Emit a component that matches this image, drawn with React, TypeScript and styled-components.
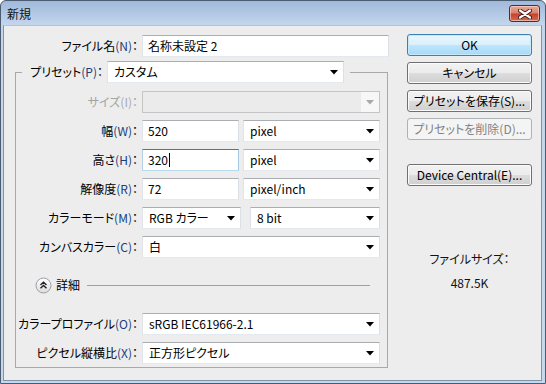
import React from "react";
import styled, { createGlobalStyle, css } from "styled-components";

const Global = createGlobalStyle`
  html, body { margin: 0; padding: 0; background: #ffffff; }
  body {
    font-family: "Noto Sans CJK JP", "Noto Sans", sans-serif;
    font-size: 12px;
    font-feature-settings: "palt" 1;
    color: #000;
  }
  * { box-sizing: border-box; }
`;

const Window = styled.div`
  width: 546px;
  height: 384px;
  display: flex;
  flex-direction: column;
  border: 1px solid #4b5b70;
  border-radius: 6px 6px 0 0;
  background: linear-gradient(to bottom, #a0b9db 0px, #c3d6ec 24px, #c4d8ee 100%);
  overflow: hidden;
`;

const TitleBar = styled.div`
  height: 24px;
  display: flex;
  align-items: flex-start;
  padding-left: 6px;
  flex: none;
`;

const Title = styled.div`
  font-size: 12px;
  line-height: 16px;
  margin-top: 5px;
  color: #111;
`;

const CloseButton = styled.div`
  margin-left: auto;
  margin-right: 5px;
  margin-top: 4px;
  width: 31px;
  height: 17px;
  border: 1px solid #5b2a24;
  border-radius: 3px;
  background: linear-gradient(to bottom, #eaa999 0%, #d98370 45%, #c4452e 55%, #d46a4e 100%);
  box-shadow: inset 0 0 0 1px rgba(255, 220, 210, 0.6);
  display: flex;
  align-items: center;
  justify-content: center;
`;

const Client = styled.div`
  flex: 1;
  margin: 0 3px 2px 2px;
  border: 1px solid #7e92ab;
  border-top-color: #b0c4de;
  background: #ededed;
  display: flex;
  align-items: flex-start;
`;

const LeftCol = styled.div`
  width: 385px;
  padding: 9px 0 0 11px;
  display: flex;
  flex-direction: column;
`;

const RightCol = styled.div`
  width: 125px;
  margin-left: 18px;
  padding-top: 8px;
  display: flex;
  flex-direction: column;
  gap: 6px;
`;

const Row = styled.div`
  display: flex;
  align-items: center;
  gap: 4px;
`;

const Label = styled.div<{ $w: number; $disabled?: boolean }>`
  width: ${(p) => p.$w}px;
  flex: none;
  text-align: right;
  line-height: 16px;
  white-space: nowrap;
  color: ${(p) => (p.$disabled ? "#a3a3a3" : "#000")};
`;

const Key = styled.span<{ $disabled?: boolean }>`
  color: ${(p) => (p.$disabled ? "#a7acb4" : "#1b3d78")};
`;

const fieldBase = css`
  height: 22px;
  border: 1px solid;
  border-color: #abadb3 #dbdfe6 #e3e9ef #e2e3ea;
  background: #fff;
  display: flex;
  align-items: center;
  line-height: 16px;
  white-space: nowrap;
  flex: none;
`;

const Input = styled.div<{ $w: number; $focused?: boolean }>`
  ${fieldBase};
  width: ${(p) => p.$w}px;
  padding-left: 5px;
  ${(p) =>
    p.$focused &&
    css`
      border-color: #3d7bad #a4c9e3 #b7d9ed #b5cfe7;
    `}
`;

const Caret = styled.span`
  display: inline-block;
  width: 1px;
  height: 14px;
  background: #000;
  margin-left: 1px;
`;

const Select = styled.div<{ $w: number; $ml?: number; $disabled?: boolean }>`
  ${fieldBase};
  width: ${(p) => p.$w}px;
  margin-left: ${(p) => p.$ml ?? 0}px;
  padding-left: 6px;
  justify-content: space-between;
  ${(p) =>
    p.$disabled &&
    css`
      background: #ebebeb;
      border-color: #c5c5c5;
    `}
`;

const Arrow = styled.span<{ $disabled?: boolean }>`
  width: 18px;
  height: 20px;
  display: flex;
  align-items: center;
  justify-content: center;
  flex: none;
  background: ${(p) => (p.$disabled ? "#f7f7f7" : "transparent")};
`;

const Group = styled.fieldset`
  margin: 4px 0 0 0;
  padding: 8px 7px 3px 0;
  width: 373px;
  border: 1px solid #a9a9a9;
  min-width: 0;
  display: flex;
  flex-direction: column;
  gap: 7px;
`;

const Legend = styled.legend`
  margin-left: 6px;
  padding: 0 6px 0 0;
  display: flex;
  align-items: center;
  gap: 4px;
`;

const AdvancedRow = styled.div`
  display: flex;
  align-items: center;
  height: 16px;
  margin: 12px 10px 13px 19px;
`;

const AdvancedText = styled.span`
  margin-left: 4px;
  line-height: 16px;
`;

const Rule = styled.div`
  flex: 1;
  height: 1px;
  background: #a0a0a0;
  margin-left: 7px;
`;

const Button = styled.div<{ $variant?: "default" | "disabled"; $mt?: number }>`
  height: 22px;
  margin-top: ${(p) => p.$mt ?? 0}px;
  border: 1px solid #707070;
  border-radius: 3px;
  background: linear-gradient(to bottom, #f2f2f2 0%, #ebebeb 50%, #dddddd 50%, #cfcfcf 100%);
  box-shadow: inset 0 0 0 1px #fbfbfb;
  display: flex;
  align-items: center;
  justify-content: center;
  line-height: 16px;
  white-space: nowrap;
  color: #000;
  ${(p) =>
    p.$variant === "default" &&
    css`
      border-color: #3c7fb1;
      background: linear-gradient(to bottom, #eaf6fd 0%, #d9f0fc 50%, #bee6fd 50%, #a7d9f5 100%);
      box-shadow: inset 0 0 0 1px #c6e9fb;
    `}
  ${(p) =>
    p.$variant === "disabled" &&
    css`
      border-color: #adb2b5;
      background: #f4f4f4;
      box-shadow: none;
      color: #838383;
    `}
`;

const InfoText = styled.div<{ $mt: number }>`
  text-align: center;
  line-height: 16px;
  margin-top: ${(p) => p.$mt}px;
  color: #111;
`;

const Tri = ({ disabled }: { disabled?: boolean }) => (
  <Arrow $disabled={disabled}>
    <svg width="8" height="5" viewBox="0 0 8 5">
      <path d="M0 0 H8 L4 4.5 Z" fill={disabled ? "#a8a8a8" : "#000"} />
    </svg>
  </Arrow>
);

const L = ({ text, k, w, disabled }: { text: string; k: string; w: number; disabled?: boolean }) => (
  <Label $w={w} $disabled={disabled}>
    {text}
    <Key $disabled={disabled}>({k})</Key>：
  </Label>
);

const Sel = ({ w, ml, value, disabled }: { w: number; ml?: number; value?: string; disabled?: boolean }) => (
  <Select $w={w} $ml={ml} $disabled={disabled}>
    <span>{value}</span>
    <Tri disabled={disabled} />
  </Select>
);

export default function App() {
  return (
    <>
      <Global />
      <Window>
        <TitleBar>
          <Title>新規</Title>
          <CloseButton>
            <svg width="14" height="10" viewBox="0 0 14 10">
              <path d="M2 1.5 L12 8.5 M12 1.5 L2 8.5" stroke="#3b1a15" strokeWidth="4" strokeLinecap="round" />
              <path d="M2 1.5 L12 8.5 M12 1.5 L2 8.5" stroke="#ffffff" strokeWidth="2.2" strokeLinecap="round" />
            </svg>
          </CloseButton>
        </TitleBar>
        <Client>
          <LeftCol>
            <Row>
              <L text="ファイル名" k="N" w={123} />
              <Input $w={247}>名称未設定 2</Input>
            </Row>
            <Group>
              <Legend>
                <L text="プリセット" k="P" w={81} />
                <Sel w={237} value="カスタム" />
              </Legend>
              <Row>
                <L text="サイズ" k="I" w={122} disabled />
                <Sel w={238} disabled />
              </Row>
              <Row>
                <L text="幅" k="W" w={122} />
                <Input $w={97}>520</Input>
                <Sel w={137} value="pixel" />
              </Row>
              <Row>
                <L text="高さ" k="H" w={122} />
                <Input $w={97} $focused>
                  320
                  <Caret />
                </Input>
                <Sel w={137} value="pixel" />
              </Row>
              <Row>
                <L text="解像度" k="R" w={122} />
                <Input $w={97}>72</Input>
                <Sel w={137} value="pixel/inch" />
              </Row>
              <Row>
                <L text="カラーモード" k="M" w={122} />
                <Sel w={99} value="RGB カラー" />
                <Sel w={130} ml={5} value="8 bit" />
              </Row>
              <Row>
                <L text="カンバスカラー" k="C" w={122} />
                <Sel w={238} value="白" />
              </Row>
              <AdvancedRow>
                <svg width="17" height="17" viewBox="0 0 17 17">
                  <defs>
                    <linearGradient id="adv" x1="0" y1="0" x2="0" y2="1">
                      <stop offset="0" stopColor="#ffffff" />
                      <stop offset="1" stopColor="#dcdcdc" />
                    </linearGradient>
                  </defs>
                  <circle cx="8.5" cy="8.5" r="7.5" fill="url(#adv)" stroke="#9a9ea3" />
                  <path d="M5.5 8 L8.5 5.2 L11.5 8 M5.5 11.2 L8.5 8.4 L11.5 11.2" fill="none" stroke="#222" strokeWidth="1.4" />
                </svg>
                <AdvancedText>詳細</AdvancedText>
                <Rule />
              </AdvancedRow>
              <Row>
                <L text="カラープロファイル" k="O" w={122} />
                <Sel w={238} value="sRGB IEC61966-2.1" />
              </Row>
              <Row>
                <L text="ピクセル縦横比" k="X" w={122} />
                <Sel w={238} value="正方形ピクセル" />
              </Row>
            </Group>
          </LeftCol>
          <RightCol>
            <Button $variant="default">OK</Button>
            <Button>キャンセル</Button>
            <Button>プリセットを保存(S)...</Button>
            <Button $variant="disabled">プリセットを削除(D)...</Button>
            <Button $mt={18}>Device Central(E)...</Button>
            <InfoText $mt={59}>ファイルサイズ：</InfoText>
            <InfoText $mt={2}>487.5K</InfoText>
          </RightCol>
        </Client>
      </Window>
    </>
  );
}
